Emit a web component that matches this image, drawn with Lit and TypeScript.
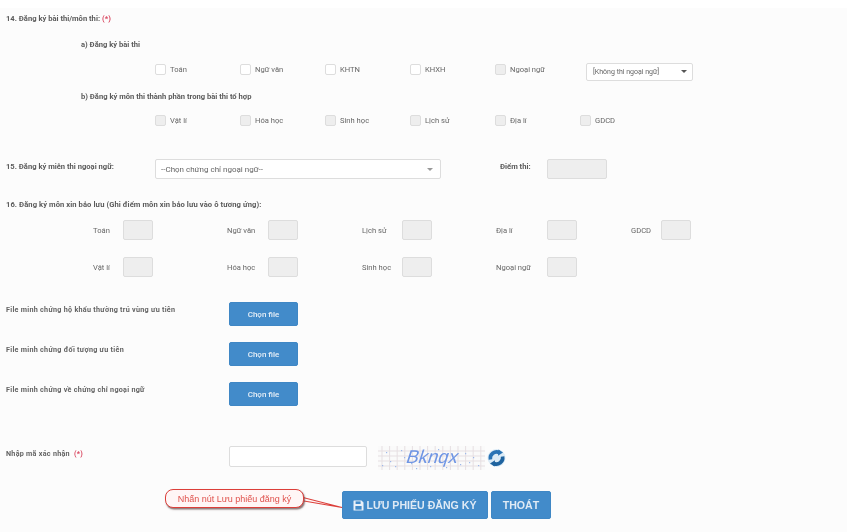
import { LitElement, html, css, svg } from "lit";
import { customElement } from "lit/decorators.js";

const captchaDots = [
  [8,6],[17,20],[26,11],[33,17],[12,15],[44,5],[52,20],[60,3],[68,21],[76,13],[82,18],[87,7],[91,16],[95,11],[100,19],[23,4],[38,22],[4,19],
];

@customElement("app-root")
export class AppRoot extends LitElement {
  static styles = css`
    :host { display: block; width: 847px; height: 532px; overflow: hidden; background: #fff; filter: blur(0.5px);
      font-family: Roboto, "Liberation Sans", sans-serif; font-size: 7.6px; color: #666; }
    .page { box-sizing: border-box; height: 532px; margin-top: 8px; padding-top: 2px; background: #fcfcfc; display: flex; flex-direction: column; }
    .t { font-weight: 700; color: #5a5a5a; font-size: 7.6px; }
    .req { color: #d9465f; margin-left: 2px; }
    .row { display: flex; align-items: center; flex: none; }
    .title { height: 16px; padding-left: 6px; }
    .sub { height: 16px; padding-left: 81px; }
    .m10 { margin-top: 10px; } .m7 { margin-top: 7px; } .m9 { margin-top: 9px; } .m6 { margin-top: 6px; }
    .checks { height: 20px; padding-left: 155px; }
    .chk { width: 85px; display: flex; align-items: center; gap: 4px; flex: none; }
    .chk input { appearance: none; margin: 0; box-sizing: border-box; width: 11px; height: 11px; border: 1px solid #ddd; border-radius: 2px; background: #fff; flex: none; }
    .chk.off input { background: #eee; }
    .chk.last { width: 83px; }
    .sel { box-sizing: border-box; display: flex; align-items: center; justify-content: space-between; background: #fff; border: 1px solid #ddd; border-radius: 2px; color: #666; flex: none; }
    .sel.small { width: 107px; height: 18px; margin: 5px 0 0 8px; padding: 0 5px 0 6px; font-size: 7px; }
    .sel.big { width: 286px; height: 20px; padding: 0 7px 0 5px; font-size: 8px; }
    .arrow { width: 0; height: 0; border-left: 3.5px solid transparent; border-right: 3.5px solid transparent; border-top: 3.5px solid #555; }
    .big .arrow { border-top-color: #999; border-top-width: 3px; }
    .r15 { margin-top: 29px; height: 20px; padding-left: 6px; align-items: flex-start; }
    .r15 .t { width: 149px; line-height: 16px; }
    .r15 .d { width: 59px; margin-left: 59px; box-sizing: border-box; }
    .box { box-sizing: border-box; display: block; margin: 0; background: #eee; border: 1px solid #ddd; border-radius: 2px; padding: 0; flex: none; }
    .w60 { width: 60px; height: 20px; margin-left: -12px; }
    .r16 { margin-top: 17px; letter-spacing: .07px; }
    .scores { height: 20px; margin-top: 8px; }
    .scores.two { margin-top: 17px; }
    .cell { display: flex; align-items: center; flex: none; }
    .cell .box { width: 30px; height: 20px; }
    .file { height: 24px; padding-left: 6px; align-items: flex-start; margin-top: 16px; }
    .file.first { margin-top: 25px; }
    .lab { width: 223px; line-height: 16px; font-weight: 700; color: #626262; font-size: 7.2px; letter-spacing: .27px; flex: none; }
    .btn { box-sizing: border-box; background: #428bca; color: #eef4fa; border: 1px solid #3f87c5; border-radius: 2px; display: flex; align-items: center; justify-content: center; font-family: Roboto, "Liberation Sans", sans-serif; flex: none; }
    .choose { width: 69px; height: 24px; font-size: 8px; font-weight: 500; color: #e6eff7; }
    .cap { height: 24px; margin-top: 40px; padding-left: 6px; align-items: flex-start; }
    .cap input { box-sizing: border-box; width: 138px; height: 21px; border: 1px solid #ddd; border-radius: 2px; background: #fff; margin: 0 11px 0 0; padding: 0; flex: none; }
    .cap svg { display: block; flex: none; }
    .refresh { margin: 2px 0 0 2px; }
    .acts { position: relative; height: 28px; margin-top: 21px; padding-left: 342px; gap: 3px; }
    .save { width: 146px; height: 28px; font-family: "Liberation Sans", sans-serif; font-size: 10.6px; font-weight: 700; gap: 2px; color: #dfeaf5; }
    .exit { width: 60px; height: 28px; font-family: "Liberation Sans", sans-serif; font-size: 10.6px; font-weight: 700; color: #dfeaf5; }
    .callout { position: absolute; left: 165px; top: -2px; box-sizing: border-box; width: 139px; height: 19px; display: flex; align-items: center; justify-content: center;
      background: #fff6f6; border: 1.5px solid #dc3f3a; border-radius: 8px; color: #e0514c; font-family: "Liberation Sans", sans-serif; font-size: 9px; box-shadow: 1px 1.5px 1.5px rgba(90,60,60,.7); }
    .tail { position: absolute; left: 301px; top: 4px; }
  `;

  private check(label: string, off = false) {
    return html`<label class="chk ${off ? "off" : ""}"><input type="checkbox" />${label}</label>`;
  }

  private score(label: string, width: number, labelWidth: number) {
    return html`<div class="cell" style="padding-left:${width}px"><span style="width:${labelWidth}px">${label}</span><input class="box" /></div>`;
  }

  private file(label: string, first = false) {
    return html`<div class="row file ${first ? "first" : ""}"><span class="lab">${label}</span><button class="btn choose">Chọn file</button></div>`;
  }

  render() {
    return html`<div class="page">
      <div class="row title t">14. Đăng ký bài thi/môn thi: <span class="req">(*)</span></div>
      <div class="row sub t m10">a) Đăng ký bài thi</div>
      <div class="row checks m7">
        ${this.check("Toán")}${this.check("Ngữ văn")}${this.check("KHTN")}${this.check("KHXH")}
        <label class="chk off last"><input type="checkbox" />Ngoại ngữ</label>
        <div class="sel small">[Không thi ngoại ngữ]<i class="arrow"></i></div>
      </div>
      <div class="row sub t m9">b) Đăng ký môn thi thành phần trong bài thi tổ hợp</div>
      <div class="row checks m6">
        ${this.check("Vật lí", true)}${this.check("Hóa học", true)}${this.check("Sinh học", true)}${this.check("Lịch sử", true)}${this.check("Địa lí", true)}${this.check("GDCD", true)}
      </div>
      <div class="row r15">
        <span class="t">15. Đăng ký miễn thi ngoại ngữ:</span>
        <div class="sel big">--Chọn chứng chỉ ngoại ngữ--<i class="arrow"></i></div>
        <span class="t d">Điểm thi:</span>
        <input class="box w60" />
      </div>
      <div class="row title t r16">16. Đăng ký môn xin bảo lưu (Ghi điểm môn xin bảo lưu vào ô tương ứng):</div>
      <div class="row scores">
        ${this.score("Toán", 93, 30)}${this.score("Ngữ văn", 74, 41)}${this.score("Lịch sử", 64, 40)}${this.score("Địa lí", 64, 51)}${this.score("GDCD", 54, 30)}
      </div>
      <div class="row scores two">
        ${this.score("Vật lí", 93, 30)}${this.score("Hóa học", 74, 41)}${this.score("Sinh học", 64, 40)}${this.score("Ngoại ngữ", 64, 51)}
      </div>
      ${this.file("File minh chứng hộ khẩu thường trú vùng ưu tiên", true)}
      ${this.file("File minh chứng đối tượng ưu tiên")}
      ${this.file("File minh chứng về chứng chỉ ngoại ngữ")}
      <div class="row cap">
        <span class="lab">Nhập mã xác nhận <span class="req">(*)</span></span>
        <input />
        <svg width="107" height="24" viewBox="0 0 107 24">
          <rect width="107" height="24" fill="#fafafa" />
          ${[5,10,15,20].map((y) => svg`<line x1="0" x2="107" y1=${y} y2=${y} stroke="#e6dfe2" stroke-width="1" />`)}
          ${Array.from({ length: 14 }, (_, i) => svg`<line y1="0" y2="24" x1=${4 + i * 7.6} x2=${4 + i * 7.6} stroke="#e6dfe2" stroke-width="1" />`)}
          ${captchaDots.map(([x, y]) => svg`<rect x=${x} y=${y} width="1.2" height="1.2" fill="#9db8ea" />`)}
          <text transform="translate(27 17) skewX(-18)" font-family="'Liberation Sans', sans-serif" font-size="18.5" fill="#6f95e4">Bknqx</text>
        </svg>
        <svg class="refresh" width="19" height="20" viewBox="0 0 19 20">
          <circle cx="9.5" cy="10" r="9" fill="#dcebf6" />
          <path d="M3.4 11.5a6.4 6.4 0 0 1 9-7" fill="none" stroke="#2a73b5" stroke-width="3.6" />
          <path d="M11.4 1.4 L16 4.4 L11 7.8z" fill="#2a73b5" />
          <path d="M15.6 8.5a6.4 6.4 0 0 1-9 7" fill="none" stroke="#1f639f" stroke-width="3.6" />
          <path d="M7.6 18.6 L3 15.6 L8 12.2z" fill="#1f639f" />
        </svg>
      </div>
      <div class="row acts">
        <button class="btn save">
          <svg width="11" height="11" viewBox="0 0 11 11"><path d="M1 .5h7.5l2 2V10a.5.5 0 0 1-.5.5H1a.5.5 0 0 1-.5-.5V1A.5.5 0 0 1 1 .5z" fill="#e8f0f8" /><rect x="2.6" y="1.4" width="5" height="2.6" fill="#428bca" /><rect x="2.4" y="6" width="6.2" height="3.6" fill="#428bca" /></svg>
          LƯU PHIẾU ĐĂNG KÝ
        </button>
        <button class="btn exit">THOÁT</button>
        <svg class="tail" width="43" height="14" viewBox="0 0 43 14"><path d="M0 2 L41 12.5 L0 5.5" fill="#fff6f6" stroke="#dc3f3a" stroke-width="1.1" /></svg>
        <div class="callout">Nhấn nút Lưu phiếu đăng ký</div>
      </div>
    </div>`;
  }
}
